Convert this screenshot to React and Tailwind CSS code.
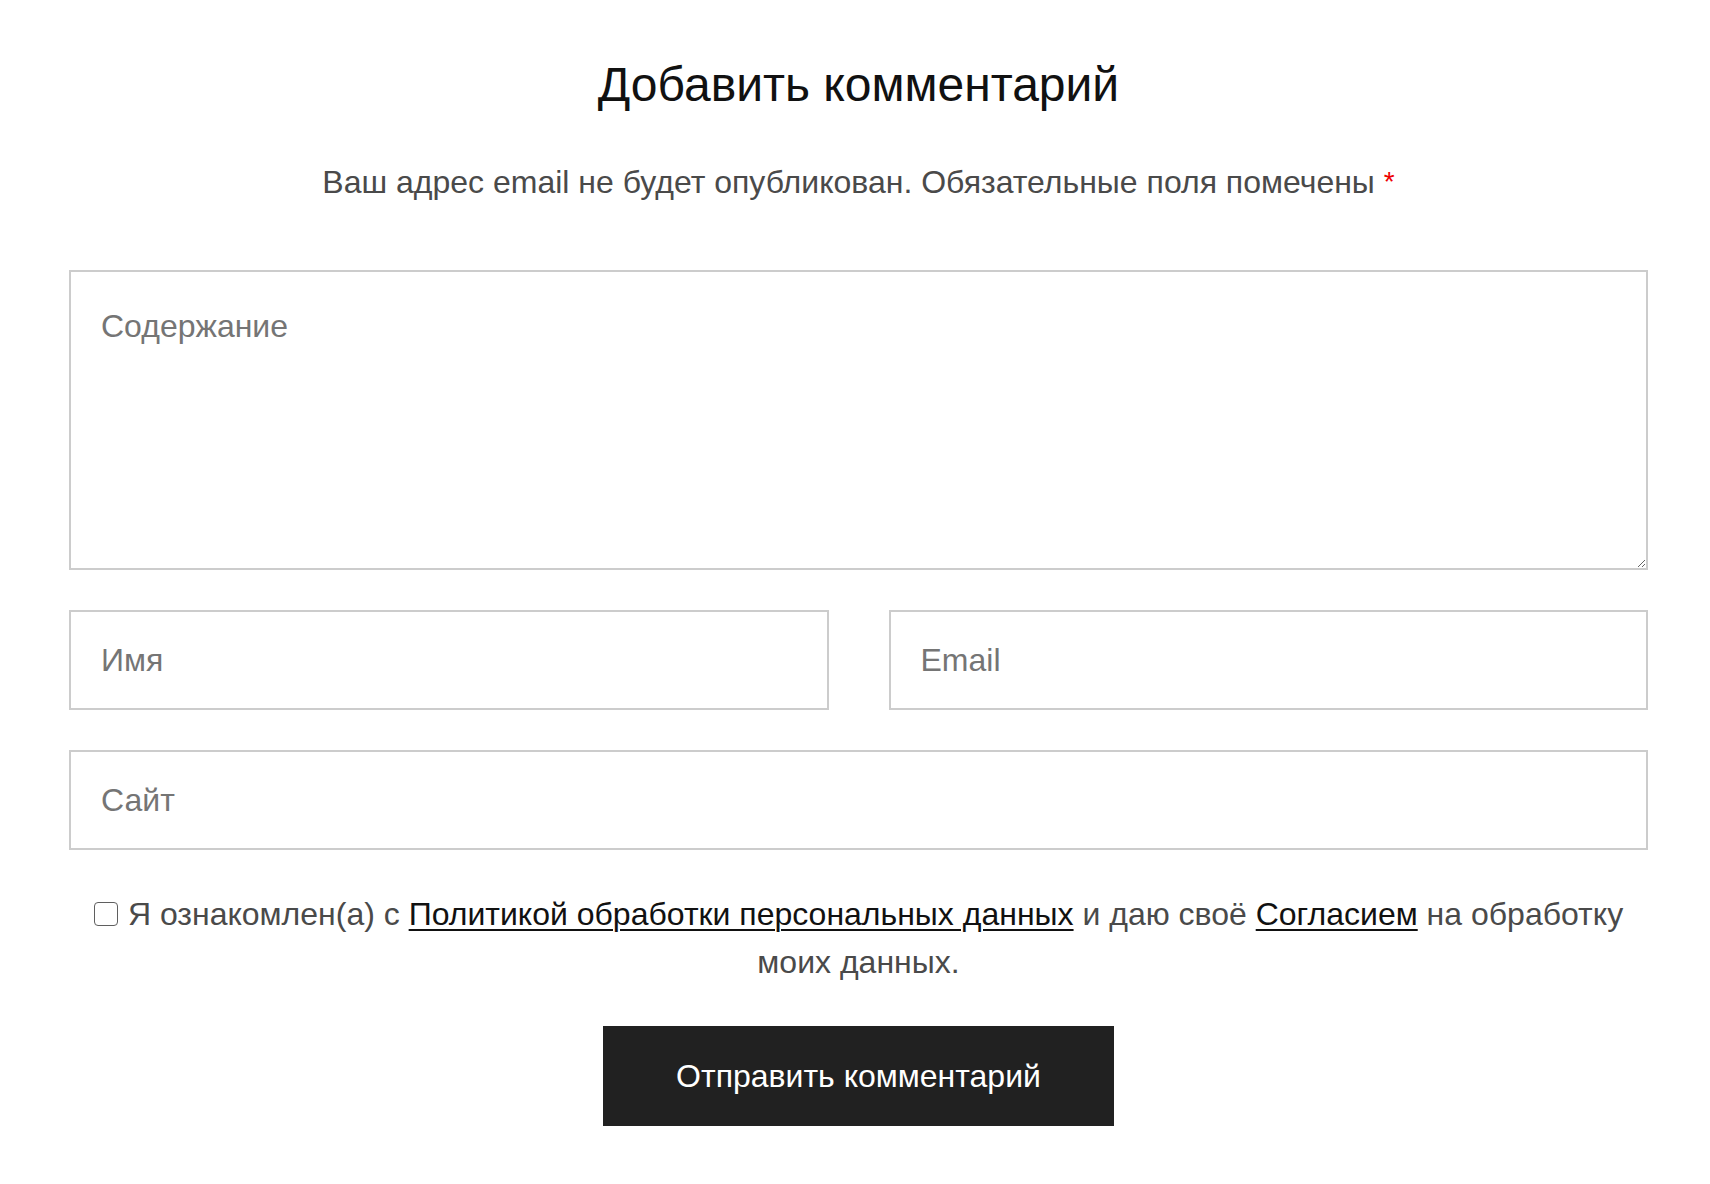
export default function App() {
  return (
    <div
      className="min-h-screen bg-white"
      style={{ fontFamily: '"Liberation Sans", Arial, sans-serif' }}
    >
      <div className="w-[1579px] ml-[69px] pt-[56px] pb-[58px]">
        {/* Heading */}
        <h2 className="text-center text-[48px] leading-[58px] text-[#111]">Добавить комментарий</h2>
        <p className="mt-[44px] text-center text-[32px] leading-[48px] text-[#4a4a4a]">
          Ваш адрес email не будет опубликован. Обязательные поля помечены{' '}
          <span className="text-[#e00] text-[28px] align-top">*</span>
        </p>

        <form className="mt-[64px] flex flex-col gap-[40px]" onSubmit={e => e.preventDefault()}>
          <textarea
            placeholder="Содержание"
            className="block w-full h-[300px] border-2 border-[#ccc] px-[30px] py-[32px] text-[32px] leading-[45px] text-[#333] placeholder:text-[#757575] outline-none"
          />

          <div className="grid grid-cols-2 gap-[60px]">
            <input
              placeholder="Имя"
              className="h-[100px] border-2 border-[#ccc] px-[30px] text-[32px] text-[#333] placeholder:text-[#757575] outline-none"
            />
            <input
              placeholder="Email"
              className="h-[100px] border-2 border-[#ccc] px-[30px] text-[32px] text-[#333] placeholder:text-[#757575] outline-none"
            />
          </div>

          <input
            placeholder="Сайт"
            className="h-[100px] border-2 border-[#ccc] px-[30px] text-[32px] text-[#333] placeholder:text-[#757575] outline-none"
          />

          {/* Consent */}
          <p className="px-[24px] text-center text-[32px] leading-[48px] text-[#4a4a4a]">
            <input
              type="checkbox"
              className="appearance-none inline-block w-[24px] h-[24px] mr-[10px] border border-[#5f5f5f] rounded-[4px] bg-white align-[-1px]"
            />
            Я ознакомлен(а) с{' '}
            <a href="#" className="text-[#111] underline underline-offset-[4px] decoration-[2px]">
              Политикой обработки персональных данных
            </a>{' '}
            и даю своё{' '}
            <a href="#" className="text-[#111] underline underline-offset-[4px] decoration-[2px]">
              Согласием
            </a>{' '}
            на обработку моих данных.
          </p>

          <div className="flex justify-center">
            <button
              type="submit"
              className="h-[100px] px-[73px] bg-[#212121] text-white text-[32px]"
            >
              Отправить комментарий
            </button>
          </div>
        </form>
      </div>
    </div>
  )
}
